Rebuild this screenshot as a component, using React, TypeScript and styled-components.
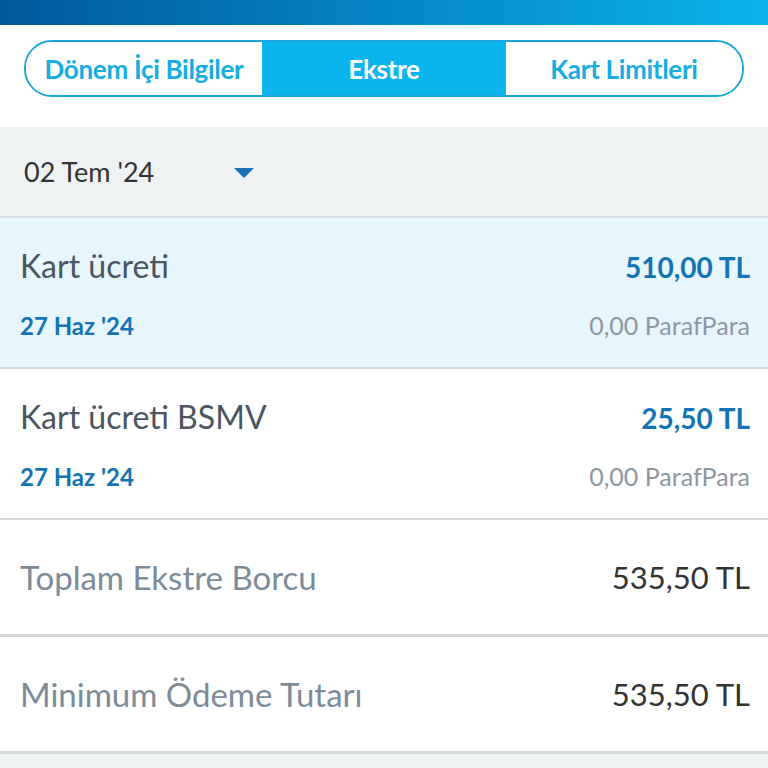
import React from "react";
import styled, { createGlobalStyle } from "styled-components";

const GlobalStyle = createGlobalStyle`
  html, body {
    margin: 0;
    padding: 0;
    background: #eff2f3;
    font-family: Lato, "Noto Sans", "Liberation Sans", sans-serif;
  }
  * { box-sizing: border-box; }
`;

type Tx = {
  title: string;
  amount: string;
  date: string;
  points: string;
  highlight?: boolean;
};

const transactions: Tx[] = [
  { title: "Kart ücreti", amount: "510,00 TL", date: "27 Haz '24", points: "0,00 ParafPara", highlight: true },
  { title: "Kart ücreti BSMV", amount: "25,50 TL", date: "27 Haz '24", points: "0,00 ParafPara" },
];

const totals = [
  { label: "Toplam Ekstre Borcu", value: "535,50 TL" },
  { label: "Minimum Ödeme Tutarı", value: "535,50 TL" },
];

const tabs = ["Dönem İçi Bilgiler", "Ekstre", "Kart Limitleri"];

const App = () => {
  return (
    <Page>
      <GlobalStyle />
      <TopBar />
      <TabBand>
        <Segmented>
          {tabs.map((t) => (
            <Tab key={t} active={t === "Ekstre"}>
              {t}
            </Tab>
          ))}
        </Segmented>
      </TabBand>
      <PeriodPicker>
        <span>02 Tem '24</span>
        <Caret />
      </PeriodPicker>
      {transactions.map((tx) => (
        <TxRow key={tx.title} highlight={tx.highlight}>
          <Line>
            <TxTitle>{tx.title}</TxTitle>
            <TxAmount>{tx.amount}</TxAmount>
          </Line>
          <Line>
            <TxDate>{tx.date}</TxDate>
            <TxPoints>{tx.points}</TxPoints>
          </Line>
        </TxRow>
      ))}
      {totals.map((t) => (
        <TotalRow key={t.label}>
          <TotalLabel>{t.label}</TotalLabel>
          <TotalValue>{t.value}</TotalValue>
        </TotalRow>
      ))}
    </Page>
  );
};

const Page = styled.div`
  width: 768px;
  min-height: 768px;
  background: #eff2f3;
`;

const TopBar = styled.div`
  height: 25px;
  background: linear-gradient(90deg, #00589a 0%, #0585c6 50%, #0bb3ec 100%);
`;

const TabBand = styled.div`
  background: #fff;
  padding: 15px 24px 30px;
`;

const Segmented = styled.div`
  display: grid;
  grid-template-columns: 236px 244px 1fr;
  height: 57px;
  border: 2px solid #1aa6da;
  border-radius: 28px;
  overflow: hidden;
`;

const Tab = styled.div<{ active?: boolean }>`
  display: flex;
  align-items: center;
  justify-content: center;
  font-size: 26px;
  font-weight: 700;
  letter-spacing: -0.3px;
  white-space: nowrap;
  color: ${(p) => (p.active ? "#fff" : "#16ade4")};
  background: ${(p) => (p.active ? "#0bb4ec" : "#fff")};
`;

const PeriodPicker = styled.div`
  height: 91px;
  display: flex;
  align-items: center;
  padding: 0 24px;
  font-size: 27px;
  color: #333;
  border-bottom: 2px solid #d9dcde;
  span {
    width: 210px;
  }
`;

const Caret = styled.div`
  width: 0;
  height: 0;
  border-left: 10px solid transparent;
  border-right: 10px solid transparent;
  border-top: 10px solid #1a72b9;
  margin-top: 2px;
`;

const TxRow = styled.div<{ highlight?: boolean }>`
  height: 151px;
  padding: 28px 18px 0 20px;
  display: flex;
  flex-direction: column;
  gap: 25px;
  background: ${(p) => (p.highlight ? "#e7f5fd" : "#fff")};
  border-bottom: 2px solid #d6d8d9;
`;

const Line = styled.div`
  display: flex;
  justify-content: space-between;
  align-items: baseline;
`;

const TxTitle = styled.div`
  font-size: 32px;
  color: #4b5560;
`;

const TxAmount = styled.div`
  font-size: 28px;
  font-weight: 700;
  color: #1474b2;
`;

const TxDate = styled.div`
  font-size: 24px;
  font-weight: 700;
  color: #1474b2;
`;

const TxPoints = styled.div`
  font-size: 25px;
  color: #8d979f;
`;

const TotalRow = styled.div`
  height: 117px;
  display: flex;
  align-items: center;
  justify-content: space-between;
  padding: 0 18px 0 20px;
  background: #fff;
  border-bottom: 3px solid #d6d8d9;
`;

const TotalLabel = styled.div`
  font-size: 33px;
  color: #7d8b99;
`;

const TotalValue = styled.div`
  font-size: 31px;
  color: #333;
`;

export default App;
